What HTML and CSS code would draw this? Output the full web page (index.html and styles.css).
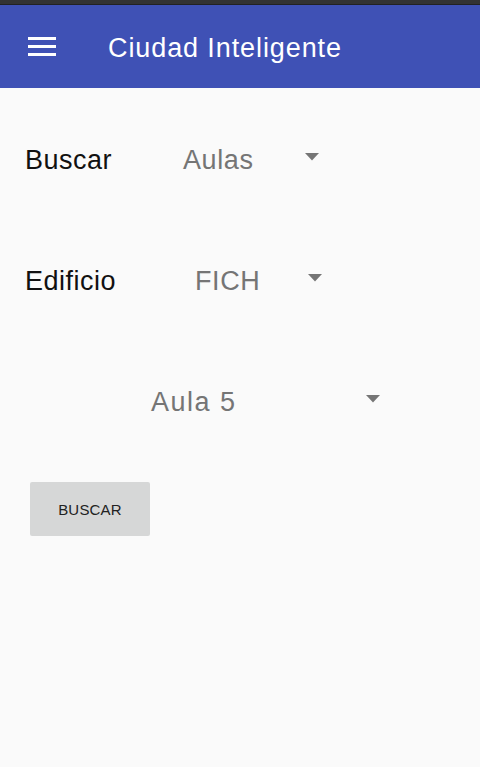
FILE: index.html
```html
<!DOCTYPE html>
<html lang="es">
<head>
<meta charset="utf-8">
<title>Ciudad Inteligente</title>
<link rel="stylesheet" href="styles.css">
</head>
<body>
<div class="status"></div>
<header class="appbar">
  <div class="menu" aria-label="Menú">
    <span class="bar"></span><span class="bar"></span><span class="bar"></span>
  </div>
  <h1 class="title">Ciudad Inteligente</h1>
</header>
<main class="content">
  <div class="row row-1">
    <span class="label">Buscar</span>
    <span class="value value-1">Aulas</span>
    <svg class="arrow arrow-1" width="14" height="8" viewBox="0 0 14 8"><polygon points="0,0 14,0 7,7.5" fill="#757575"/></svg>
  </div>
  <div class="row row-2">
    <span class="label">Edificio</span>
    <span class="value value-2">FICH</span>
    <svg class="arrow arrow-2" width="14" height="8" viewBox="0 0 14 8"><polygon points="0,0 14,0 7,7.5" fill="#757575"/></svg>
  </div>
  <div class="row row-3">
    <span class="value value-3">Aula 5</span>
    <svg class="arrow arrow-3" width="14" height="8" viewBox="0 0 14 8"><polygon points="0,0 14,0 7,7.5" fill="#757575"/></svg>
  </div>
  <button class="btn" type="button">BUSCAR</button>
</main>
</body>
</html>
```
FILE: styles.css
```css
html, body {
  margin: 0;
  padding: 0;
}
body {
  width: 480px;
  height: 767px;
  background: #fafafa;
  font-family: "Liberation Sans", Arial, sans-serif;
  overflow: hidden;
}
.status {
  height: 4px;
  background: #333333;
  border-bottom: 1px solid #222222;
}
.appbar {
  height: 83px;
  background: #3f51b5;
  display: flex;
  align-items: center;
}
.menu {
  margin-left: 28px;
  width: 28px;
  display: flex;
  flex-direction: column;
  gap: 5px;
}
.bar {
  display: block;
  height: 3px;
  background: #ffffff;
}
.title {
  margin: 4px 0 0 52px;
  color: #ffffff;
  font-weight: normal;
  font-size: 27px;
  letter-spacing: 0.9px;
}
.content {
  padding: 52px 0 0 25px;
}
.row {
  display: flex;
  align-items: flex-start;
  height: 40px;
  line-height: 40px;
  font-size: 27px;
  margin-bottom: 81px;
}
.row-3 {
  margin-bottom: 60px;
}
.label {
  color: #111111;
  width: 100px;
  letter-spacing: 0.5px;
}
.value {
  color: #757575;
  letter-spacing: 0.6px;
}
.value-1 { margin-left: 58px; width: 122px; }
.value-2 { margin-left: 70px; width: 113px; }
.value-3 { margin-left: 126px; width: 215px; letter-spacing: 1.5px; }
.arrow {
  display: block;
  margin-top: 13px;
}
.btn {
  margin-left: 5px;
  width: 120px;
  height: 54px;
  border: none;
  border-radius: 2px;
  background: #d6d7d7;
  color: #222222;
  font-family: "Liberation Sans", Arial, sans-serif;
  font-size: 15px;
  padding: 0;
  letter-spacing: 0.2px;
}
```
